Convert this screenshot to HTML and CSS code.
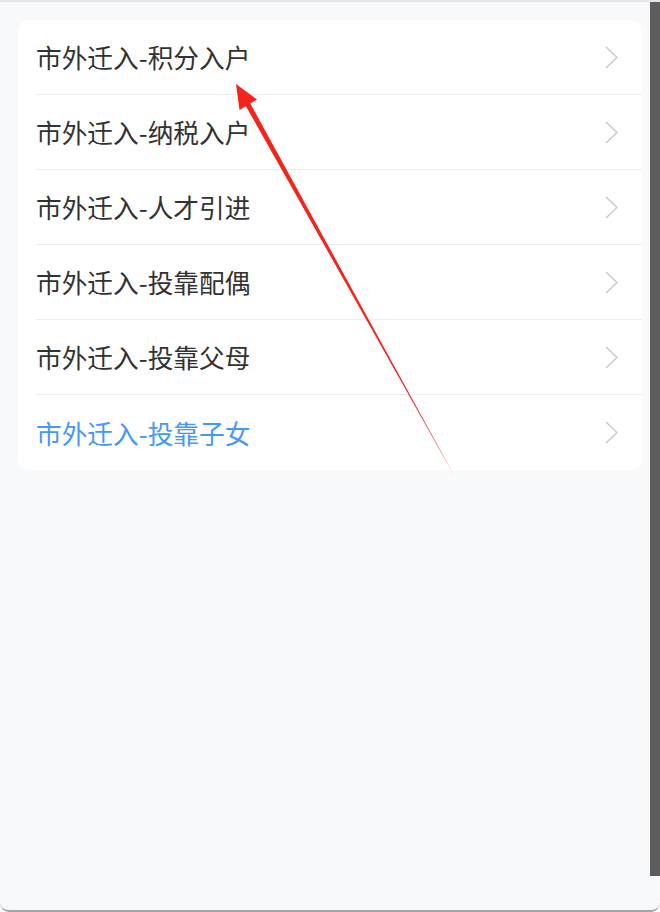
FILE: index.html
```html
<!DOCTYPE html>
<html lang="zh-CN">
<head>
<meta charset="utf-8">
<title>市外迁入</title>
<link rel="stylesheet" href="styles.css">
</head>
<body>
<div class="frame">
  <main class="content">
    <section class="card">
      <div class="cell"><span class="cell-title">市外迁入-积分入户</span><svg class="chev" width="13" height="23" viewBox="0 0 13 23"><polyline points="1,1 12,11.5 1,22" /></svg></div>
      <div class="cell"><span class="cell-title">市外迁入-纳税入户</span><svg class="chev" width="13" height="23" viewBox="0 0 13 23"><polyline points="1,1 12,11.5 1,22" /></svg></div>
      <div class="cell"><span class="cell-title">市外迁入-人才引进</span><svg class="chev" width="13" height="23" viewBox="0 0 13 23"><polyline points="1,1 12,11.5 1,22" /></svg></div>
      <div class="cell"><span class="cell-title">市外迁入-投靠配偶</span><svg class="chev" width="13" height="23" viewBox="0 0 13 23"><polyline points="1,1 12,11.5 1,22" /></svg></div>
      <div class="cell"><span class="cell-title">市外迁入-投靠父母</span><svg class="chev" width="13" height="23" viewBox="0 0 13 23"><polyline points="1,1 12,11.5 1,22" /></svg></div>
      <div class="cell cell-active"><span class="cell-title">市外迁入-投靠子女</span><svg class="chev" width="13" height="23" viewBox="0 0 13 23"><polyline points="1,1 12,11.5 1,22" /></svg></div>
    </section>
  </main>
  <div class="scroll-strip"></div>
  <svg class="annot-arrow" width="660" height="912" viewBox="0 0 660 912">
    <polygon class="arrow-shaft" points="245.5,105.5 250,103 455,477" />
    <polygon class="arrow-head" points="236,84 239.5,110 257,99.5" />
  </svg>
</div>
</body>
</html>
```

FILE: styles.css
```css
html, body {
  margin: 0;
  padding: 0;
}

body {
  background: #ffffff;
  font-family: "Noto Sans CJK SC", "Noto Sans", sans-serif;
}

.frame {
  position: relative;
  box-sizing: border-box;
  width: 660px;
  height: 912px;
  display: flex;
  align-items: flex-start;
  background: #f8f9fb;
  border-top: 2px solid #e6e7ea;
  border-bottom: 2px solid #a4a4a6;
  border-radius: 0 0 9px 9px;
  overflow: hidden;
}

.content {
  flex: 1;
  min-width: 0;
}

.card {
  margin: 18px 8px 0 18px;
  background: #ffffff;
  border-radius: 10px;
  overflow: hidden;
}

.cell {
  box-sizing: border-box;
  height: 75px;
  margin-left: 17px;
  padding-right: 24px;
  display: flex;
  align-items: center;
  justify-content: space-between;
  border-bottom: 1px solid #ebedf0;
}

.cell:last-child {
  border-bottom: none;
}

.cell-title {
  font-size: 25.7px;
  line-height: 34px;
  color: #323233;
  padding-left: 1px;
}

.cell-active .cell-title {
  color: #4598f3;
}

.chev polyline {
  fill: none;
  stroke: #c8c9cc;
  stroke-width: 1.5;
}

.scroll-strip {
  width: 10px;
  height: 874px;
  background: #5d5d5e;
  flex: none;
}

.annot-arrow {
  position: absolute;
  left: 0;
  top: -2px;
  pointer-events: none;
}

.arrow-shaft,
.arrow-head {
  fill: #f5231b;
}
```
